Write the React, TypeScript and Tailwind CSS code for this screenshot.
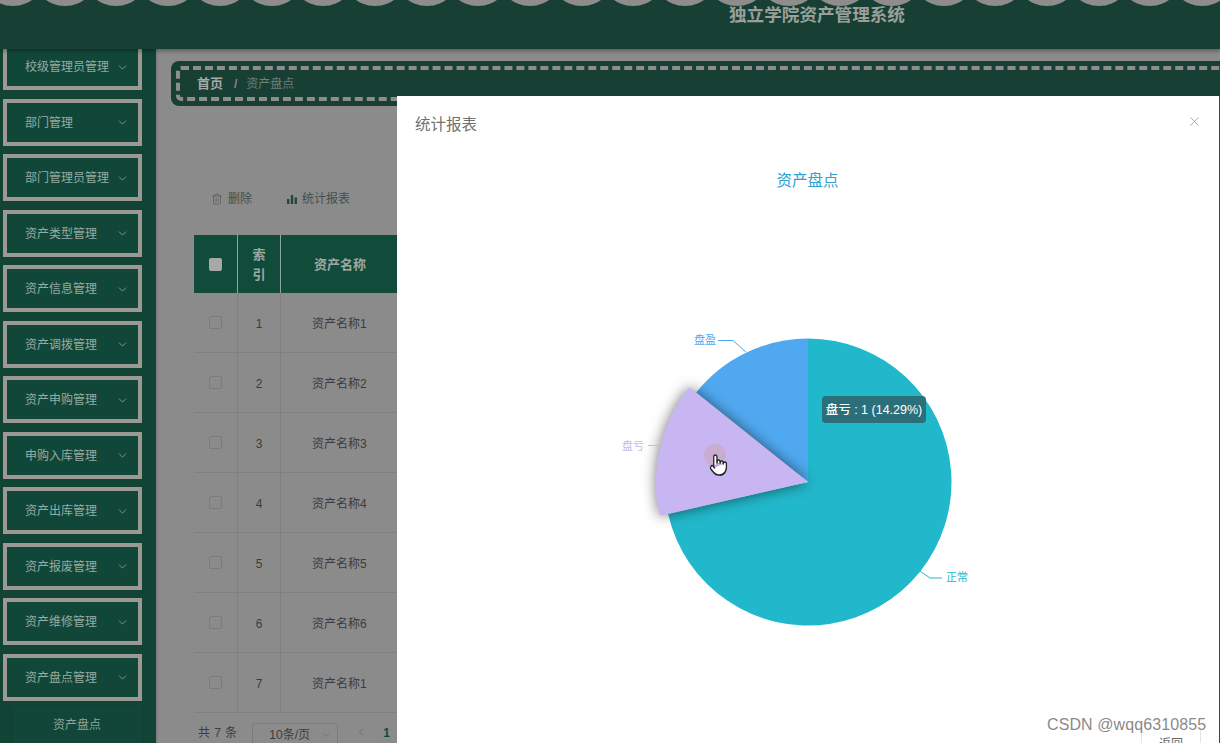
import { ChevronDown, ChevronLeft, Pointer, Trash2, X } from "lucide-react";

const font = "font-['Liberation_Sans','Noto_Sans_CJK_SC',sans-serif]";

const menus = [
  "校级管理员管理",
  "部门管理",
  "部门管理员管理",
  "资产类型管理",
  "资产信息管理",
  "资产调拨管理",
  "资产申购管理",
  "申购入库管理",
  "资产出库管理",
  "资产报废管理",
  "资产维修管理",
  "资产盘点管理",
];

const rows = ["资产名称1", "资产名称2", "资产名称3", "资产名称4", "资产名称5", "资产名称6", "资产名称1"];

function Header() {
  return (
    <header className="relative z-10 h-[49px] shrink-0 overflow-hidden bg-[#183f33] shadow-[0_2px_4px_rgba(0,0,0,0.35)]">
      <div className="-ml-[20px] flex">
        {Array.from({ length: 25 }).map((_, i) => (
          <div key={i} className="-mt-[60px] -mr-[14.3px] h-[66px] w-[66px] shrink-0 rounded-full bg-[#8f8c8c]" />
        ))}
      </div>
      <div className="absolute top-[3px] left-[729px] text-[17.6px] leading-[24px] font-bold text-[#9a9f9b]">
        独立学院资产管理系统
      </div>
    </header>
  );
}

function Sidebar() {
  return (
    <aside className="-mt-[6px] flex h-[700px] w-[156px] shrink-0 flex-col bg-[#124436] pl-[3px]">
      {menus.map((m) => (
        <div
          key={m}
          className="mb-[8.5px] flex h-[47px] w-[139px] shrink-0 items-center justify-between border-[4px] border-[#9c9894] bg-[#114739] pt-[1px] pr-[9px] pl-[18px] text-[12px] text-[#96aba3]"
        >
          <span>{m}</span>
          <ChevronDown size={13} strokeWidth={1.5} className="text-[#8fa39b]" />
        </div>
      ))}
      <div className="-mt-[3px] ml-[8px] flex h-[38px] w-[132px] shrink-0 items-center justify-center border-x border-[#114033] bg-[#114638] text-[12px] text-[#8fa39b]">
        资产盘点
      </div>
    </aside>
  );
}

function Table() {
  return (
    <div className="mt-[24px] ml-[36px] w-[1026px] text-[12px] text-[#3c3c3c]">
      <div className="grid h-[58px] grid-cols-[44px_43px_1fr] bg-[#114c3b] text-[13px] font-bold text-[#9fa8a4]">
        <div className="flex items-center justify-center border-r border-[#8fa39b]">
          <div className="h-[13px] w-[13px] rounded-[2px] bg-[#a8a8a8]" />
        </div>
        <div className="flex items-center justify-center border-r border-[#8fa39b] pt-[2px] text-center leading-[20px]">
          索<br />引
        </div>
        <div className="flex items-center pt-[2px] pl-[33px]">资产名称</div>
      </div>
      {rows.map((name, i) => (
        <div key={i} className="grid h-[60px] grid-cols-[44px_43px_1fr] border-b border-[#808080]">
          <div className="flex items-center justify-center border-r border-[#808080]">
            <div className="h-[13px] w-[13px] rounded-[2px] border border-[#7b7b7b]" />
          </div>
          <div className="flex items-center justify-center border-r border-[#808080] pt-[2px]">{i + 1}</div>
          <div className="flex items-center pt-[2px] pl-[31px]">{name}</div>
        </div>
      ))}
      <div className="mt-[10px] flex items-start">
        <span className="mt-[1px] ml-[4px] tracking-[0.4px]">共 7 条</span>
        <div className="ml-[15px] flex h-[24px] w-[86px] items-center justify-between rounded-[3px] border border-[#7b7b7b] pr-[5px] pl-[16px]">
          <span>10条/页</span>
          <ChevronDown size={12} className="text-[#777]" />
        </div>
        <ChevronLeft size={12} className="mt-[3px] ml-[17px] text-[#6f6f6f]" />
        <span className="mt-[1px] ml-[16px] font-bold text-[#114c3b]">1</span>
      </div>
    </div>
  );
}

function Main() {
  return (
    <main className="min-w-0 flex-1 border-l-2 border-[#808080]">
      <div className="mt-[12px] ml-[13px] h-[45px] w-[1100px] rounded-[8px] bg-[#183f33] p-[5px]">
        <div className="flex h-full items-center rounded-[5px] border-[4px] border-dashed border-[#8f8c8c] pl-[17px] text-[12px]">
          <span className="text-[13px] font-bold text-[#a3a9a8]">首页</span>
          <span className="mr-[9px] ml-[11px] font-bold text-[#7e8d88]">/</span>
          <span className="text-[#6f7f79]">资产盘点</span>
        </div>
      </div>
      <div className="mt-[81px] ml-[53px] flex h-[24px] items-center text-[12px] text-[#3f5049]">
        <Trash2 size={12} strokeWidth={1.5} className="text-[#5c5c5c]" />
        <span className="ml-[5px]">删除</span>
        <svg width="12" height="12" viewBox="0 0 12 12" className="ml-[34px] fill-[#24463b]">
          <rect x="1" y="6" width="2.4" height="5" />
          <rect x="4.8" y="2" width="2.4" height="9" />
          <rect x="8.6" y="4.5" width="2.4" height="6.5" />
        </svg>
        <span className="ml-[4px]">统计报表</span>
      </div>
      <Table />
    </main>
  );
}

function PieChart() {
  return (
    <svg width="822" height="460" viewBox="397 200 822 460" className="block">
      <path d="M808 482 L808 338.5 A143.5 143.5 0 1 1 668.1 514 Z" fill="#22b8cb" />
      <path d="M808 482 L696.2 392.5 A143.5 143.5 0 0 1 808 338.5 Z" fill="#50a9f0" />
      <path
        d="M808 482 L689.2 387.2 A152 152 0 0 0 659.8 515.8 Z"
        fill="#c8b6f2"
        className="drop-shadow-[0_0_7px_rgba(0,0,0,0.55)]"
      />
      <g fill="none" strokeWidth="1">
        <path d="M746 352 L733 340.5 L718 340.5" stroke="#50a9f0" />
        <path d="M661 445.5 L648 445.5" stroke="#c8b6f2" />
        <path d="M920 571 L930 578 L942 578" stroke="#22b8cb" />
      </g>
      <g fontSize="11">
        <text x="694" y="344" fill="#50a9f0">盘盈</text>
        <text x="622" y="450" fill="#c8b6f2">盘亏</text>
        <text x="946" y="581" fill="#22b8cb">正常</text>
      </g>
      <circle cx="715" cy="455" r="11" fill="#c9a9c4" opacity="0.75" />
      <Pointer x={709} y={453} width={19} height={24} fill="#fff" stroke="#222" strokeWidth={1.6} preserveAspectRatio="none" />
    </svg>
  );
}

function Modal() {
  return (
    <div className="absolute top-[96px] left-[397px] h-[660px] w-[823px] border-r border-[#444] bg-white">
      <div className="flex h-[56px] items-start justify-between pt-[19px] pr-[17px] pl-[18px]">
        <span className="text-[15.5px] leading-[20px] text-[#707070]">统计报表</span>
        <X size={15} strokeWidth={1.3} className="-mt-[1px] text-[#9a9a9a]" />
      </div>
      <div className="mt-[19px] h-[22px] pr-[1px] text-center text-[15.5px] leading-[20px] text-[#2f9fcf]">资产盘点</div>
      <div className="mt-[7px]">
        <PieChart />
      </div>
      <div className="absolute top-[300px] left-[425px] flex h-[27px] w-[104px] items-center justify-center rounded-[4px] bg-[#2b6f7a] pt-[1px] text-[12.5px] font-medium text-white">
        盘亏 : 1 (14.29%)
      </div>
      <div className="absolute top-[632px] left-[744px] flex h-[30px] w-[60px] items-center justify-center border-x border-[#e4e4e4] pt-[2px] text-[12px] text-[#666]">
        返回
      </div>
      <div className="absolute top-[620px] left-[650px] text-[16px] leading-[18px] tracking-[0.1px] text-[#8a8a8a]">
        CSDN @wqq6310855
      </div>
    </div>
  );
}

export default function App() {
  return (
    <div className={`${font} relative flex h-[743px] w-[1220px] flex-col overflow-hidden bg-[#8b8b8b]`}>
      <Header />
      <div className="flex min-h-0 flex-1">
        <Sidebar />
        <Main />
      </div>
      <Modal />
    </div>
  );
}
